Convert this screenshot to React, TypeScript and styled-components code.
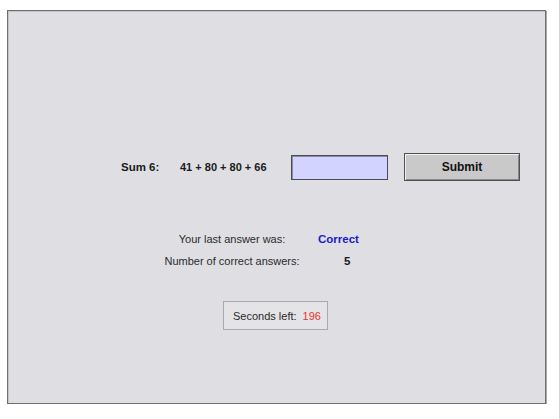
import React from "react";
import styled, { createGlobalStyle } from "styled-components";

const Global = createGlobalStyle`
  html, body { margin: 0; padding: 0; background: #ffffff; }
  body { font-family: "Liberation Sans", Arial, sans-serif; }
`;

const Panel = styled.div`
  box-sizing: border-box;
  margin: 10px 0 0 7px;
  width: 539px;
  height: 394px;
  background: #dfdfe3;
  border: 1px solid #6f6f6f;
  box-shadow: 1px 1px 0 #a8a8a8, inset 1px 1px 0 #c4c4c8;
  display: flex;
  flex-direction: column;
  font-size: 11px;
  color: #1a1a1a;
`;

const QuestionRow = styled.div`
  display: flex;
  align-items: center;
  margin-top: 142px;
  padding-left: 113px;
  height: 28px;
`;

const Cell = styled.div<{ $w: number; $size: number }>`
  width: ${(p) => p.$w}px;
  font-size: ${(p) => p.$size}px;
  font-weight: bold;
  white-space: nowrap;
`;

const AnswerInput = styled.input`
  box-sizing: border-box;
  width: 97px;
  height: 25px;
  margin: 0 16px 0 0;
  padding: 0 4px;
  background: #d3d3ff;
  border: 1px solid #4a4a58;
  box-shadow: inset 1px 1px 0 #8a8aa0;
  font-family: inherit;
  font-size: 12px;
  outline: none;
`;

const SubmitButton = styled.button`
  box-sizing: border-box;
  width: 116px;
  height: 28px;
  padding: 0;
  background: #c9c9c9;
  border: 1px solid #505050;
  box-shadow: inset 1px 1px 0 #efefef, inset -1px -1px 0 #888888;
  font-family: inherit;
  font-size: 12px;
  font-weight: bold;
  color: #111;
`;

const InfoGrid = styled.div`
  display: grid;
  grid-template-columns: 160px auto;
  margin-top: 47px;
  padding-left: 144px;
  line-height: 22px;
`;

const InfoLabel = styled.div`
  text-align: center;
  color: #2a2a2a;
  white-space: nowrap;
`;

const InfoValue = styled.div<{ $color?: string; $indent: number }>`
  padding-left: ${(p) => p.$indent}px;
  font-size: 11.5px;
  font-weight: bold;
  color: ${(p) => p.$color ?? "#1a1a1a"};
`;

const TimerBox = styled.div`
  box-sizing: border-box;
  align-self: flex-start;
  margin: 29px 0 0 215px;
  width: 105px;
  height: 29px;
  display: flex;
  align-items: center;
  padding-left: 9px;
  gap: 6px;
  white-space: nowrap;
  border: 1px solid #a9a9ad;
  background: #e4e4e7;
  color: #2a2a2a;
`;

const TimerValue = styled.span`
  color: #f03030;
`;

export default function App() {
  return (
    <>
      <Global />
      <Panel>
        <QuestionRow>
          <Cell $w={59} $size={11.5}>Sum 6:</Cell>
          <Cell $w={111} $size={11}>41 + 80 + 80 + 66</Cell>
          <AnswerInput type="text" />
          <SubmitButton>Submit</SubmitButton>
        </QuestionRow>
        <InfoGrid>
          <InfoLabel>Your last answer was:</InfoLabel>
          <InfoValue $color="#1c1cc8" $indent={6}>Correct</InfoValue>
          <InfoLabel>Number of correct answers:</InfoLabel>
          <InfoValue $indent={32}>5</InfoValue>
        </InfoGrid>
        <TimerBox>
          <span>Seconds left:</span>
          <TimerValue>196</TimerValue>
        </TimerBox>
      </Panel>
    </>
  );
}
